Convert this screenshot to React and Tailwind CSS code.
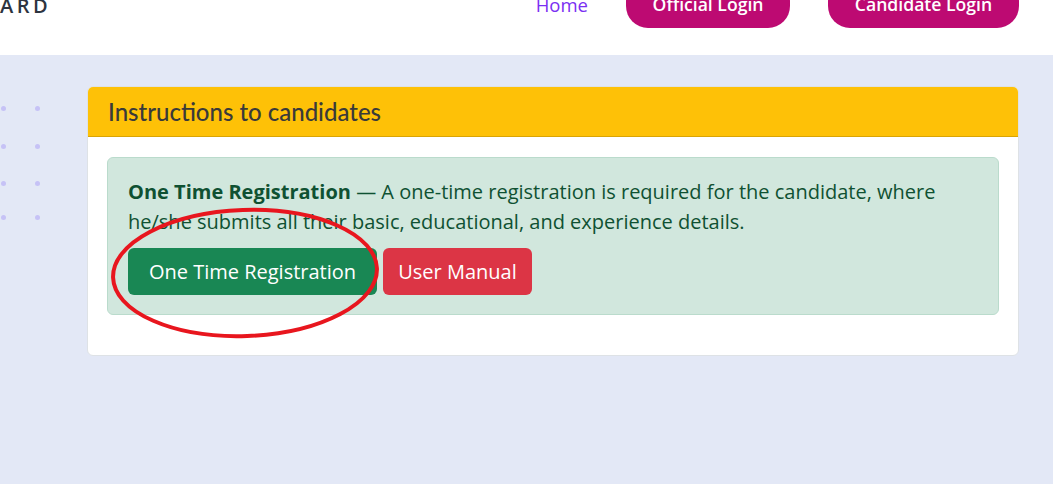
import React from "react";

export default function App() {
  return (
    <div className="relative w-full h-[484px] overflow-hidden bg-[#e3e8f6] font-['Open_Sans',sans-serif]">
      <header className="h-[55px] bg-white overflow-hidden">
        <div className="-mt-[20px] h-[48px] flex items-center justify-between pr-[34px]">
          <div className="text-[20px] font-semibold tracking-[3.5px] text-[#2d3440] leading-none pt-[3px]">ARD</div>
          <nav className="flex items-center gap-[38px]">
            <a className="text-[18.5px] text-[#7a2ff2] leading-[27px]">Home</a>
            <button className="w-[164px] h-[48px] rounded-[22px] bg-[#bd0a72] text-white text-[17.6px] font-semibold">Official Login</button>
            <button className="w-[191px] h-[48px] rounded-[22px] bg-[#bd0a72] text-white text-[17.6px] font-semibold">Candidate Login</button>
          </nav>
        </div>
      </header>

      <div className="absolute left-[1px] top-[106px] flex gap-[29px]">
        {[0, 1].map((c) => (
          <div key={c} className="flex flex-col">
            <span className="w-[5px] h-[5px] rounded-full bg-[#c6c2f6]"></span>
            <span className="mt-[33px] w-[5px] h-[5px] rounded-full bg-[#c6c2f6]"></span>
            <span className="mt-[32px] w-[5px] h-[5px] rounded-full bg-[#c6c2f6]"></span>
            <span className="mt-[29px] w-[5px] h-[5px] rounded-full bg-[#c6c2f6]"></span>
          </div>
        ))}
      </div>

      <main className="pt-[31px] pl-[87px]">
        <div className="w-[932px] bg-white border border-[#dee2e6] rounded-[6px] overflow-hidden">
          <div className="h-[50px] bg-[#fec107] border-b border-[#d9a404] px-[20px] flex items-center">
            <h2 className="text-[24px] text-[#3a3a3a] font-['Lato',sans-serif] font-medium">Instructions to candidates</h2>
          </div>
          <div className="px-[19px] pt-[20px] pb-[40px]">
            <div className="bg-[#d1e7dd] border border-[#badbcc] rounded-[6px] px-[20px] pt-[19px] pb-[19px] text-[#0f5132]">
              <p className="text-[20px] leading-[30px]">
                <strong className="font-bold">One Time Registration</strong> — A one-time registration is required for the candidate, where he/she submits all their basic, educational, and experience details.
              </p>
              <div className="mt-[11px] flex gap-[6px]">
                <button className="h-[47px] w-[249px] rounded-[6px] bg-[#198754] text-white text-[20px]">One Time Registration</button>
                <button className="h-[47px] w-[149px] rounded-[6px] bg-[#dc3545] text-white text-[20px]">User Manual</button>
              </div>
            </div>
          </div>
        </div>
      </main>

      <svg className="absolute left-0 top-0 pointer-events-none" width="1053" height="484" viewBox="0 0 1053 484">
        <ellipse cx="245" cy="273" rx="132" ry="63" fill="none" stroke="#e8161e" strokeWidth="4" transform="rotate(-2 245 273)" />
      </svg>
    </div>
  );
}
